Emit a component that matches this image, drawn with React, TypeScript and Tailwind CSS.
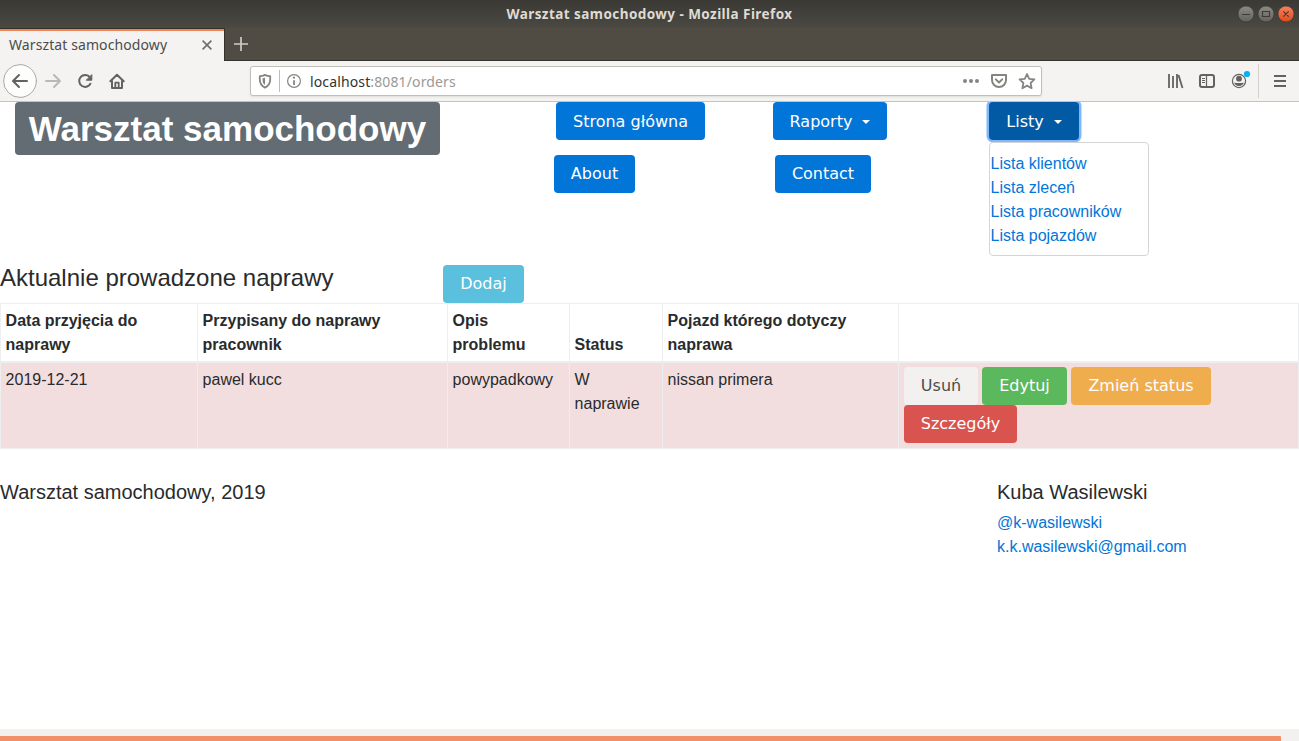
import React from "react";

type Tone = "primary" | "active" | "info" | "light" | "success" | "warning" | "danger";

const tones: Record<Tone, string> = {
  primary: "bg-[#0275d8] text-white",
  active: "bg-[#025aa5] text-white shadow-[0_0_0_2.5px_#7fb9fb]",
  info: "bg-[#5bc0de] text-white",
  light: "bg-[#f2f1f0] text-[#4c4c4c]",
  success: "bg-[#5cb85c] text-white",
  warning: "bg-[#f0ad4e] text-white",
  danger: "bg-[#d9534f] text-white",
};

function Button({ tone = "primary", width, caret, pad = "", children }: { tone?: Tone; width: string; caret?: boolean; pad?: string; children: React.ReactNode }) {
  return (
    <button className={`flex h-[38px] shrink-0 items-center justify-center whitespace-nowrap rounded-[4px] font-['DejaVu_Sans',sans-serif] text-[16px] leading-6 ${width} ${pad} ${tones[tone]}`}>
      <span>{children}</span>
      {caret && <span className="ml-[10px] border-x-[4px] border-t-[4px] border-x-transparent border-t-white" />}
    </button>
  );
}

function TitleBar() {
  return (
    <div className="relative flex h-7 items-center justify-center bg-linear-to-b from-[#3a3934] to-[#4b4942]">
      <div className="font-['Noto_Sans',sans-serif] text-[13.5px] font-bold leading-5 tracking-[0.44px] text-[#dfdbd2]">
        <span className="whitespace-nowrap">Warsztat samochodowy - Mozilla Firefox</span>
      </div>
      <svg className="absolute right-0 top-[5px]" width="64" height="19" viewBox="0 0 64 19">
        <defs>
          <linearGradient id="grayBtn" x1="0" y1="0" x2="0" y2="1">
            <stop offset="0" stopColor="#8c8b84" />
            <stop offset="1" stopColor="#62615b" />
          </linearGradient>
          <linearGradient id="closeBtn" x1="0" y1="0" x2="0" y2="1">
            <stop offset="0" stopColor="#f4845f" />
            <stop offset="1" stopColor="#e04a1a" />
          </linearGradient>
        </defs>
        <circle cx="11" cy="9" r="8" fill="url(#grayBtn)" stroke="#33322e" strokeWidth=".6" />
        <circle cx="31" cy="9" r="8" fill="url(#grayBtn)" stroke="#33322e" strokeWidth=".6" />
        <circle cx="51" cy="9" r="8" fill="url(#closeBtn)" stroke="#33322e" strokeWidth=".6" />
        <path d="M7 9.5h8M27.5 6.5h7v5h-7zM48.3 6.3l5.4 5.4m0-5.4-5.4 5.4" fill="none" stroke="#3c3b37" strokeWidth="1.1" />
      </svg>
    </div>
  );
}

function TabStrip() {
  return (
    <div className="flex h-[33px] bg-[#504c44]">
      <div className="flex h-[33px] w-[225px] items-center justify-between border-r border-t border-[#33312c] bg-[#f4f3f1] pl-[9px] pr-[12px] shadow-[inset_0_2px_0_#f28356]">
        <span className="whitespace-nowrap font-['Noto_Sans',sans-serif] text-[14px] leading-5 tracking-[0.1px] text-[#4c4c4c]">Warsztat samochodowy</span>
        <svg width="10" height="10" viewBox="0 0 10 10" className="shrink-0">
          <path d="M.6.6l8.800 8.800m0-8.800L.6 9.400" stroke="#706e6a" strokeWidth="1.6" />
        </svg>
      </div>
      <div className="flex flex-1 border-b border-[#34322e] pl-[9px] pt-[9px]">
        <svg width="14" height="14" viewBox="0 0 14 14">
          <path d="M7 0v14M0 7h14" stroke="#cfccc6" strokeWidth="1.7" />
        </svg>
      </div>
    </div>
  );
}

function Toolbar() {
  return (
    <div className="flex h-[41px] shrink-0 border-b border-[#c4c3c1] bg-[#f4f3f1]">
      <svg width="250" height="40" viewBox="0 0 250 40" fill="none" stroke="#64625f" strokeWidth="2" strokeLinecap="round" strokeLinejoin="round">
        <circle cx="20" cy="20" r="16.4" fill="#fdfdfc" stroke="#aaa8a4" strokeWidth="1" />
        <path d="M27 20H13m6-6-6 6 6 6" />
        <path d="M46 20h14m-6-6 6 6-6 6" stroke="#b9b8b5" />
        <path d="M90 16.300A6 6 0 1 0 90.800 22" strokeLinecap="butt" />
        <path d="M91.800 14v5.200h-5.200z" fill="#64625f" strokeWidth="1" />
        <path d="M110.300 20.200 117 13.700l6.700 6.500M112 20v7h10v-7" />
        <path d="M115.300 27v-5.300h3.400V27" strokeWidth="1.8" />
      </svg>
      <div className="mt-[5px] flex h-[30px] w-[792px] shrink-0 items-center rounded-[3px] border border-[#c1bfbc] bg-white shadow-[0_1px_2px_#dddddb]">
        <svg width="58" height="28" viewBox="0 0 58 28" className="shrink-0" fill="none" stroke="#858481">
          <path d="M8.800 9.200c2.300 0 3.800-.5 5.200-1.300 1.400.8 2.900 1.300 5.200 1.300v3.300c0 4-1.800 6.400-5.200 8.100-3.400-1.700-5.200-4.100-5.200-8.100z" strokeWidth="1.8" strokeLinejoin="round" />
          <path d="M14 10.500c-.8.4-1.600.6-2.400.7v2c0 2 .7 3.500 2.400 4.700z" fill="#858481" stroke="none" />
          <path d="M28.500 3v22" stroke="#bebdbb" />
          <circle cx="43" cy="14" r="6.400" strokeWidth="1.2" />
          <path d="M43 13.300v4.600" strokeWidth="1.8" />
          <circle cx="43" cy="10.700" r="1.1" fill="#858481" stroke="none" />
        </svg>
        <span className="ml-px mt-px flex-1 whitespace-nowrap font-['Noto_Sans',sans-serif] text-[14px] leading-5 tracking-[0.13px] text-[#9a9996]">
          <span className="text-[#333]">localhost</span>:8081/orders
        </span>
        <svg width="83" height="28" viewBox="0 0 83 28" className="shrink-0" fill="none" stroke="#858481" strokeWidth="2" strokeLinejoin="round" strokeLinecap="round">
          <g fill="#858481" stroke="none">
            <circle cx="7" cy="14" r="2" />
            <circle cx="13" cy="14" r="2" />
            <circle cx="19" cy="14" r="2" />
          </g>
          <path d="M34 8h14v5a7 7 0 0 1-14 0z" />
          <path d="M37.800 12.400 41 15.500l3.200-3.100" />
          <path d="m69 7 2.200 4.800 5.200.6-3.800 3.600 1 5.200-4.600-2.600-4.600 2.600 1-5.200-3.800-3.600 5.200-.6z" strokeWidth="1.8" />
        </svg>
      </div>
      <svg width="257" height="40" viewBox="1042 61 257 40" fill="none" stroke="#64625f" strokeWidth="2">
        <path d="M1169 74v14M1173 76v12M1177 74v14" strokeWidth="1.8" />
        <path d="m1178.500 75 4 13" strokeWidth="1.8" />
        <rect x="1200" y="75" width="14" height="12" rx="2" />
        <path d="M1206.500 75v12" strokeWidth="1.2" />
        <path d="M1202 78.500h3M1202 80.500h3M1202 82.500h3" strokeWidth="1" />
        <circle cx="1239" cy="81" r="6.600" strokeWidth="1.2" />
        <circle cx="1239" cy="78.700" r="2.900" fill="#64625f" stroke="none" />
        <path d="M1234.300 82.500c1.500.7 7.900.7 9.400 0-.3 2.200-2.200 3.600-4.700 3.600s-4.400-1.400-4.700-3.600z" fill="#64625f" stroke="none" />
        <circle cx="1247" cy="74" r="3.1" fill="#00b3f4" stroke="none" />
        <path d="M1258.500 64v34" stroke="#d2d1ce" strokeWidth="1" />
        <path d="M1274 76h12M1274 81h12M1274 86h12" />
      </svg>
    </div>
  );
}

const menuItems = ["Lista klientów", "Lista zleceń", "Lista pracowników", "Lista pojazdów"];

function SiteHeader() {
  return (
    <header className="flex h-[163px] shrink-0 pl-[15px]">
      <h1 className="mr-[114px] flex h-[53px] w-[425px] shrink-0 items-center justify-center whitespace-nowrap rounded-[4px] bg-[#636c72] text-[35px] font-bold leading-none text-white">
        <span>Warsztat samochodowy</span>
      </h1>
      <div className="flex w-[219px] flex-col gap-[15px]">
        <div className="pl-[2px]"><Button width="w-[149px]" pad="pt-px">Strona główna</Button></div>
        <Button width="w-[81px]">About</Button>
      </div>
      <div className="flex w-[216px] flex-col gap-[15px]">
        <Button width="w-[114px]" pad="pt-px" caret>Raporty</Button>
        <div className="pl-[2px]"><Button width="w-[96px]">Contact</Button></div>
      </div>
      <div className="relative">
        <Button tone="active" width="w-[90px]" pad="pt-px" caret>Listy</Button>
        <ul className="absolute left-0 top-[40px] h-[114px] w-[160px] rounded-[4px] border border-[#d5d5d5] bg-white pt-[9px] pl-[0.5px] text-[#0275d8]">
          {menuItems.map((item) => (
            <li key={item} className="h-6 whitespace-nowrap">{item}</li>
          ))}
        </ul>
      </div>
    </header>
  );
}

const columns = [
  { label: "Data przyjęcia do naprawy", width: "w-[197px]" },
  { label: "Przypisany do naprawy pracownik", width: "w-[250px]" },
  { label: "Opis problemu", width: "w-[122px]" },
  { label: "Status", width: "w-[93px]" },
  { label: "Pojazd którego dotyczy naprawa", width: "w-[236px]" },
  { label: "", width: "w-[400px]" },
];
const row = ["2019-12-21", "pawel kucc", "powypadkowy", "W naprawie", "nissan primera"];

function RepairsTable() {
  return (
    <table className="w-[1299px] table-fixed border-separate border-spacing-0 border-l border-t border-[#eceeef]">
      <thead>
        <tr className="h-[59px]">
          {columns.map((c, i) => (
            <th key={i} className={`border-b-2 border-r border-[#eceeef] pl-[4.6px] pr-[5px] pb-1 pt-[5px] text-left align-bottom font-bold ${c.width}`}>{c.label}</th>
          ))}
        </tr>
      </thead>
      <tbody>
        <tr className="h-[86px] bg-[#f2dede]">
          {row.map((v) => (
            <td key={v} className="border-b border-r border-[#eceeef] pl-[4.6px] pr-[5px] pb-1 pt-[5px] align-top">{v}</td>
          ))}
          <td className="border-b border-r border-[#eceeef] px-[5px] py-1 align-top">
            <div className="flex flex-wrap gap-x-1">
              <Button tone="light" width="w-[74px]">Usuń</Button>
              <Button tone="success" width="w-[85px]">Edytuj</Button>
              <Button tone="warning" width="w-[140px]">Zmień status</Button>
              <div className="w-full"><Button tone="danger" width="w-[113px]">Szczegóły</Button></div>
            </div>
          </td>
        </tr>
      </tbody>
    </table>
  );
}

export default function App() {
  return (
    <div className="flex h-[741px] w-[1299px] flex-col overflow-hidden bg-white font-['Liberation_Sans',Arial,sans-serif] text-[16px] leading-6 text-[#292b2c]">
      <TitleBar />
      <TabStrip />
      <Toolbar />
      <main className="flex flex-1 flex-col overflow-hidden">
        <SiteHeader />
        <div className="flex h-[38px]">
          <h2 className="w-[443px] whitespace-nowrap text-[24px] leading-[26px]">Aktualnie prowadzone naprawy</h2>
          <Button tone="info" width="w-[81px]">Dodaj</Button>
        </div>
        <RepairsTable />
        <footer className="flex pt-[32px]">
          <p className="w-[997px] text-[20px] leading-[22px]">Warsztat samochodowy, 2019</p>
          <div>
            <p className="mb-2 text-[20px] leading-[22px]">Kuba Wasilewski</p>
            <p className="text-[#0275d8]">@k-wasilewski</p>
            <p className="text-[#0275d8]">k.k.wasilewski@gmail.com</p>
          </div>
        </footer>
      </main>
      <div className="flex h-3 items-end bg-[#f2f1f0]">
        <div className="h-[5px] w-[1281px] rounded-tr-[1px] bg-[#f19069]" />
      </div>
    </div>
  );
}
